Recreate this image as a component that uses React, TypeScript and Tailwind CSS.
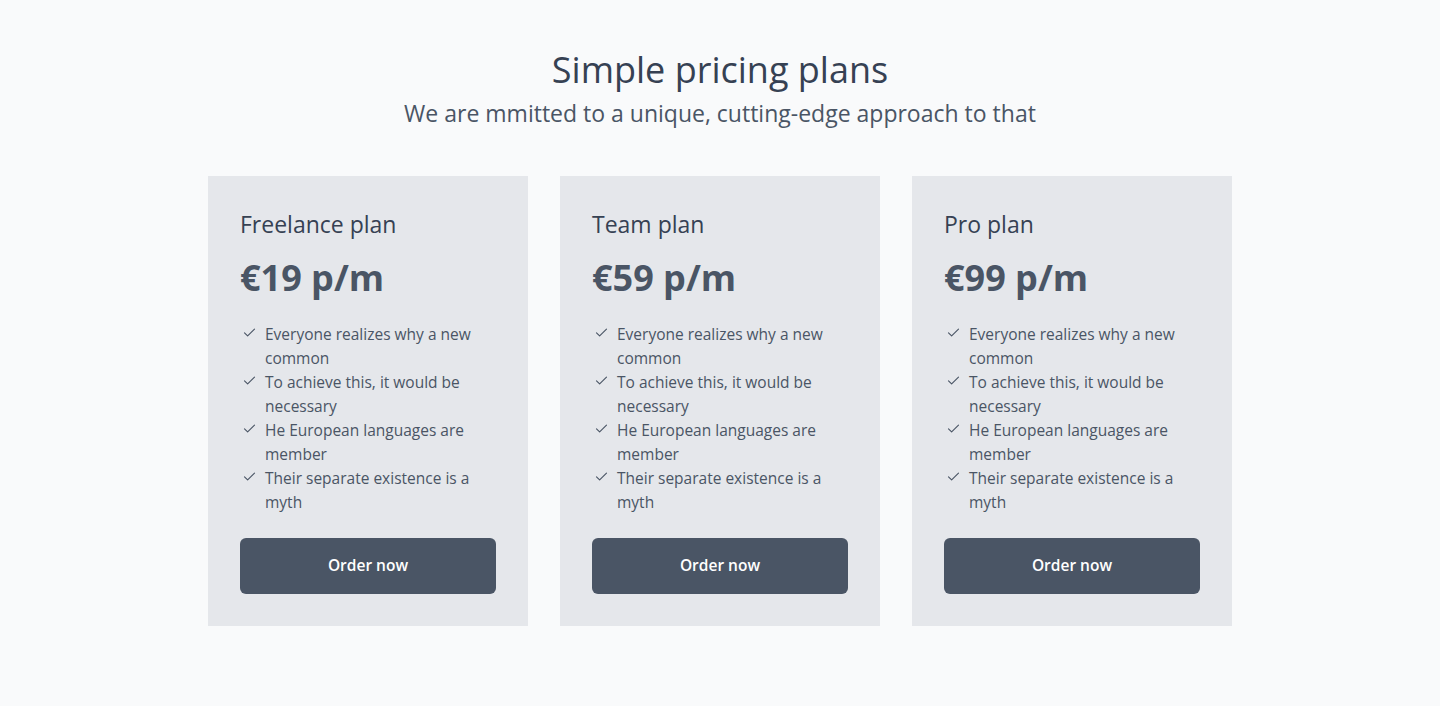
const plans = [
  { name: "Freelance plan", price: "€19 p/m" },
  { name: "Team plan", price: "€59 p/m" },
  { name: "Pro plan", price: "€99 p/m" },
];

const features = [
  "Everyone realizes why a new common",
  "To achieve this, it would be necessary",
  "He European languages are member",
  "Their separate existence is a myth",
];

function Check() {
  return (
    <svg
      viewBox="0 0 24 24"
      className="mt-[3px] h-[15px] w-[15px] shrink-0"
      fill="none"
      stroke="currentColor"
      strokeWidth="1.8"
      strokeLinecap="round"
      strokeLinejoin="round"
    >
      <path d="M4 12.5l5 5L20 6.5" />
    </svg>
  );
}

export default function App() {
  return (
    <div
      className="min-h-screen bg-gray-50 pt-[50px] pb-12"
      style={{ fontFamily: '"Open Sans", "Noto Sans", sans-serif' }}
    >
      <div className="text-center">
        <h1 className="text-[36px] leading-10 font-medium text-gray-700">
          Simple pricing plans
        </h1>
        <p className="mt-[7px] text-[23px] leading-8 text-gray-600">
          We are mmitted to a unique, cutting-edge approach to that
        </p>
      </div>
      <div className="mx-auto mt-[47px] grid max-w-5xl grid-cols-3 gap-8">
        {plans.map((plan) => (
          <div key={plan.name} className="bg-gray-200 p-8">
            <h2 className="text-[23px] leading-8 font-medium text-gray-700">
              {plan.name}
            </h2>
            <div className="mt-[18px] text-[36px] leading-10 font-bold text-gray-600">
              {plan.price}
            </div>
            <ul className="mt-[24px] text-[15.5px] leading-6 text-gray-600">
              {features.map((f) => (
                <li key={f} className="flex gap-[8px] pl-[2px]">
                  <Check />
                  <span>{f}</span>
                </li>
              ))}
            </ul>
            <button className="mt-6 h-14 w-full rounded-md bg-gray-600 text-[15.5px] font-semibold text-white">
              Order now
            </button>
          </div>
        ))}
      </div>
    </div>
  );
}
